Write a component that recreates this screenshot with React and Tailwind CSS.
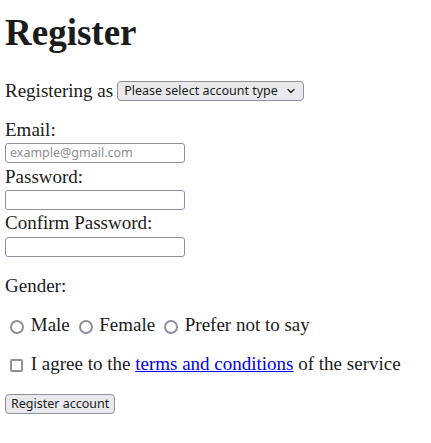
import React from 'react';

const serif = "font-['Liberation_Serif',serif]";
const ctrl = "font-['Noto_Sans',sans-serif] text-[12.5px]";

const Chevron = () => (
  <svg width="8" height="6" viewBox="0 0 8 6" className="shrink-0">
    <path d="M1 1.5 L4 4.5 L7 1.5" fill="none" stroke="#1f1f1f" strokeWidth="1.3" strokeLinecap="round" strokeLinejoin="round" />
  </svg>
);

const Radio = ({ name, first }) => (
  <input
    type="radio"
    name={name}
    className={`appearance-none w-[14px] h-[14px] rounded-full border-2 border-[#8f8f9d] bg-white mt-[4px] mr-[2px] shrink-0 ${first ? 'ml-[5px]' : 'ml-[4px]'}`}
  />
);

export default function App() {
  return (
    <div className={`${serif} text-[#1b1b1b] text-[19px] leading-[22px] px-[5px] pt-[11px] bg-white min-h-screen`}>
      <h1 className="text-[37px] leading-[44px] font-bold">Register</h1>

      <div className="mt-[26px] flex items-center h-[20px]">
        <span>Registering as</span>
        <div className={`${ctrl} ml-[4px] w-[187px] h-[20px] flex items-center justify-between pl-[6px] pr-[8px] bg-[#e9e9ed] border border-[#8f8f9d] rounded-[4px] text-[#1b1b1b]`}>
          <span className="leading-none">Please select account type</span>
          <Chevron />
        </div>
      </div>

      <form className="flex flex-col items-start">
        <label className="mt-[18px]">Email:</label>
        <input
          type="email"
          placeholder="example@gmail.com"
          className={`${ctrl} mt-[2px] w-[180px] h-[20px] px-[4px] border border-[#8f8f9d] rounded-[3px] placeholder:text-[#8d8d8d] outline-none`}
        />
        <label className="mt-[3px]">Password:</label>
        <input
          type="password"
          className={`${ctrl} mt-[2px] w-[180px] h-[20px] px-[4px] border border-[#8f8f9d] rounded-[3px] outline-none`}
        />
        <label className="mt-[2px]">Confirm Password:</label>
        <input
          type="password"
          className={`${ctrl} mt-[3px] w-[180px] h-[20px] px-[4px] border border-[#8f8f9d] rounded-[3px] outline-none`}
        />

        <div className="mt-[18px]">Gender:</div>

        <div className="mt-[17px] flex items-center whitespace-pre">
          <Radio name="gender" first />
          <span> Male </span>
          <Radio name="gender" />
          <span> Female </span>
          <Radio name="gender" />
          <span> Prefer not to say</span>
        </div>

        <div className="mt-[17px] flex items-center whitespace-pre">
          <input
            type="checkbox"
            className="appearance-none w-[13px] h-[13px] rounded-[2px] border-2 border-[#8f8f9d] bg-white mt-[2px] ml-[5px] mr-[3px] shrink-0"
          />
          <span> I agree to the <a href="#" className="text-[#0000ee] underline">terms and conditions</a> of the service</span>
        </div>

        <button
          type="button"
          className={`${ctrl} mt-[19px] h-[20px] px-[5px] bg-[#e9e9ed] border border-[#8f8f9d] rounded-[4px] leading-none text-[#1b1b1b]`}
        >
          Register account
        </button>
      </form>
    </div>
  );
}
